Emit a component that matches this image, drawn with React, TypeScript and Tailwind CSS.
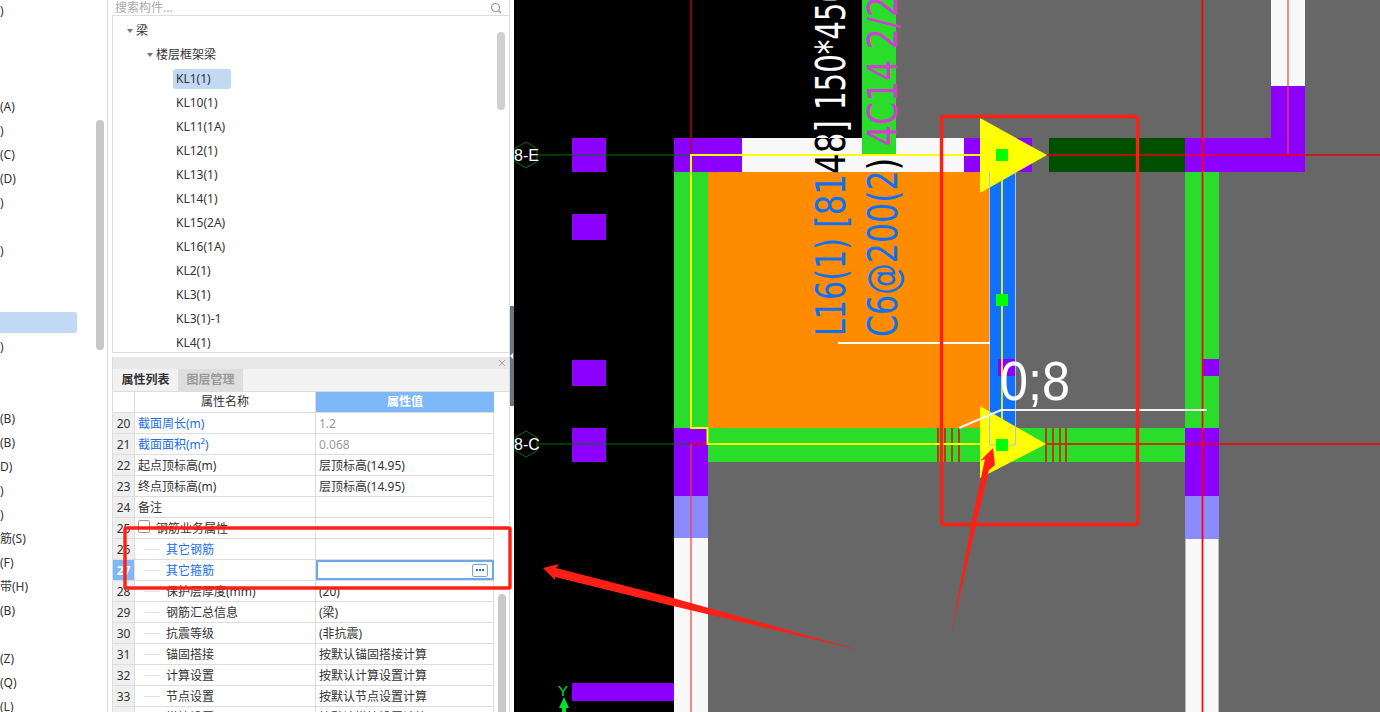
const SIDE_ROWS = [
  ")", "", "", "", "(A)", ")", "(C)", "(D)", ")", "", ")", "", "", "", ")", "", "",
  "(B)", "(B)", "D)", ")", ")", "筋(S)", "(F)", "带(H)", "(B)", "", "(Z)", "(Q)", "(L)",
];

const TREE_ITEMS = [
  "KL1(1)", "KL10(1)", "KL11(1A)", "KL12(1)", "KL13(1)", "KL14(1)", "KL15(2A)", "KL16(1A)",
  "KL2(1)", "KL3(1)", "KL3(1)-1", "KL4(1)",
];

const PROPS = [
  { no: 20, name: "截面周长(m)", value: "1.2", blue: true, muted: true },
  { no: 21, name: "截面面积(m²)", value: "0.068", blue: true, muted: true },
  { no: 22, name: "起点顶标高(m)", value: "层顶标高(14.95)" },
  { no: 23, name: "终点顶标高(m)", value: "层顶标高(14.95)" },
  { no: 24, name: "备注", value: "" },
  { no: 25, name: "钢筋业务属性", value: "", group: true },
  { no: 26, name: "其它钢筋", value: "", child: true, blue: true },
  { no: 27, name: "其它箍筋", value: "", child: true, blue: true, active: true },
  { no: 28, name: "保护层厚度(mm)", value: "(20)", child: true },
  { no: 29, name: "钢筋汇总信息", value: "(梁)", child: true },
  { no: 30, name: "抗震等级", value: "(非抗震)", child: true },
  { no: 31, name: "锚固搭接", value: "按默认锚固搭接计算", child: true },
  { no: 32, name: "计算设置", value: "按默认计算设置计算", child: true },
  { no: 33, name: "节点设置", value: "按默认节点设置计算", child: true },
  { no: 34, name: "搭接设置", value: "按默认搭接设置计算", child: true },
];

// x, y, w, h in page pixels
const CAD_RECTS: [number, number, number, number, string][] = [
  [896, 0, 484, 138, "#676767"],
  [1032, 138, 348, 34, "#676767"],
  [708, 172, 672, 540, "#676767"],
  [572, 138, 34, 34, "#8b00ff"],
  [572, 214, 34, 26, "#8b00ff"],
  [572, 360, 34, 26, "#8b00ff"],
  [572, 428, 34, 34, "#8b00ff"],
  [572, 683, 102, 18, "#8b00ff"],
  [742, 138, 222, 34, "#f8f8f8"],
  [674, 138, 68, 34, "#8b00ff"],
  [964, 138, 68, 34, "#8b00ff"],
  [862, 0, 34, 154, "#2bdd2b"],
  [674, 172, 34, 256, "#2bdd2b"],
  [708, 172, 282, 256, "#ff8c00"],
  [990, 172, 26, 256, "#1070ff"],
  [998, 359, 18, 17, "#8b00ff"],
  [1049, 138, 136, 34, "#005000"],
  [1185, 138, 120, 34, "#8b00ff"],
  [1271, 86, 34, 52, "#8b00ff"],
  [1271, 0, 34, 86, "#f8f8f8"],
  [1185, 172, 34, 256, "#2bdd2b"],
  [1203, 359, 16, 17, "#8b00ff"],
  [708, 428, 477, 34, "#2bdd2b"],
  [674, 428, 34, 68, "#8b00ff"],
  [674, 496, 34, 42, "#8b8bff"],
  [674, 538, 34, 174, "#f8f8f8"],
  [1185, 428, 34, 68, "#8b00ff"],
  [1185, 496, 34, 43, "#8b8bff"],
  [1185, 539, 34, 173, "#f8f8f8"],
];

const BEAM_TICKS = [938, 945, 952, 959, 1046, 1053, 1060, 1066];
const LABEL_FONT = "'DejaVu Sans', sans-serif";

const AxisMark = ({ y, label }: { y: number; label: string }) => (
  <g>
    <polygon
      points={`526,${y - 13} 537,${y - 6.5} 537,${y + 6.5} 526,${y + 13} 515,${y + 6.5} 515,${y - 6.5}`}
      fill="none"
      stroke="#007000"
    />
    <line x1={537} y1={y} x2={691} y2={y} stroke="#007000" strokeWidth={1.2} />
    <text x={514} y={y + 6} fill="#fff" fontSize={16} fontFamily="'Liberation Sans', sans-serif">
      {label}
    </text>
  </g>
);

const VerticalText = ({
  text,
  x,
  y,
  length,
  fill,
}: {
  text: string;
  x: number;
  y: number;
  length: number;
  fill: string;
}) => (
  <text
    transform={`translate(${x} ${y}) rotate(-90)`}
    fill={fill}
    fontSize={40}
    fontFamily={LABEL_FONT}
    textLength={length}
    lengthAdjust="spacingAndGlyphs"
  >
    {text}
  </text>
);

// the CAD view paints text in an inverted colour, so it changes with the fill below it
const BeamLabels = ({ fill }: { fill: string }) => (
  <>
    <VerticalText text="L16(1)" x={845} y={336} length={98} fill={fill} />
    <VerticalText text="[8148]" x={845} y={228} length={108} fill={fill} />
    <VerticalText text="150*450" x={845} y={110} length={126} fill={fill} />
    <VerticalText text="C6@200(2)" x={897} y={337} length={179} fill={fill} />
  </>
);

const CadCanvas = () => (
  <svg className="block h-full w-full" viewBox="514 0 866 712">
    <defs>
      <clipPath id="on-orange">
        <rect x={514} y={172} width={500} height={540} />
      </clipPath>
      <clipPath id="on-white">
        <rect x={514} y={138} width={500} height={34} />
      </clipPath>
      <clipPath id="on-black">
        <rect x={514} y={0} width={348} height={138} />
      </clipPath>
    </defs>
    <rect x={514} y={0} width={866} height={712} fill="#000" />
    {CAD_RECTS.map(([x, y, w, h, fill], i) => (
      <rect key={i} x={x} y={y} width={w} height={h} fill={fill} />
    ))}
    <line x1={1185.5} y1={539} x2={1185.5} y2={712} stroke="#bbb" />
    <line x1={1218.5} y1={539} x2={1218.5} y2={712} stroke="#bbb" />

    <AxisMark y={155} label="8-E" />
    <AxisMark y={444} label="8-C" />

    {/* red axes */}
    <line x1={691} y1={0} x2={691} y2={155} stroke="#b00020" strokeWidth={1.5} />
    <line x1={691} y1={444} x2={691} y2={712} stroke="#ff3b3b" strokeOpacity={0.6} strokeWidth={2} />
    <line x1={1288} y1={0} x2={1288} y2={155} stroke="#ff3b3b" strokeOpacity={0.6} strokeWidth={2} />
    <line x1={1202.5} y1={0} x2={1202.5} y2={712} stroke="#ff0000" strokeWidth={1.7} />
    <line x1={1047} y1={155} x2={1380} y2={155} stroke="#e8000f" strokeWidth={1.7} />
    <line x1={1046} y1={444} x2={1380} y2={444} stroke="#f00000" strokeWidth={1.7} />
    <line x1={691} y1={444} x2={708} y2={444} stroke="#f00000" strokeWidth={1.7} />
    {BEAM_TICKS.map((x) => (
      <line key={x} x1={x} y1={428} x2={x} y2={462} stroke="#e8141c" strokeWidth={1.7} />
    ))}

    {/* selected beam outline */}
    <polyline
      points="1002,155 691,155 691,428 707.5,428 707.5,444 1002,444"
      fill="none"
      stroke="#ffff00"
      strokeWidth={2}
    />
    <polygon points="980,118 1047,155 980,193" fill="#ffff00" />
    <polygon points="980,406 1046,444 980,478" fill="#ffff00" />
    <line x1={1002} y1={155} x2={1002} y2={445} stroke="#ffff00" strokeWidth={1.7} />
    <polyline
      points="989.5,172 989.5,445 1015.5,445 1015.5,172"
      fill="none"
      stroke="#a5c4ee"
      strokeWidth={1}
    />
    <rect x={996} y={149} width={12} height={12} fill="#00ff00" />
    <rect x={996} y={294} width={12} height={12} fill="#00ff00" />
    <rect x={996} y={439} width={12} height={12} fill="#00ff00" />

    {/* beam labels */}
    <g clipPath="url(#on-orange)">
      <BeamLabels fill="#1070f0" />
    </g>
    <g clipPath="url(#on-white)">
      <BeamLabels fill="#000" />
    </g>
    <g clipPath="url(#on-black)">
      <BeamLabels fill="#fff" />
    </g>
    <VerticalText text="4C14 2/2" x={897} y={146} length={150} fill="#d040d0" />

    <line x1={838} y1={343} x2={990} y2={343} stroke="#fff" strokeWidth={2} />
    <polyline points="959,428 1001,410 1207,410" fill="none" stroke="#f4f4f4" strokeWidth={2} />
    <text
      x={1000}
      y={400}
      fill="#fff"
      fontSize={55}
      fontFamily="'Liberation Sans', sans-serif"
      textLength={70}
      lengthAdjust="spacingAndGlyphs"
    >
      0;8
    </text>

    {/* world axis */}
    <text x={558} y={696} fill="#00e030" fontSize={15} fontFamily="'Liberation Sans', sans-serif">
      Y
    </text>
    <polygon points="564,697 569,708 566,708 566,712 562,712 562,708 559,708" fill="#00e030" />
  </svg>
);

const Annotations = () => (
  <svg className="pointer-events-none absolute inset-0" width={1380} height={712} viewBox="0 0 1380 712">
    <rect x={125} y={528} width={385} height={60} rx={1} fill="none" stroke="#ff2015" strokeWidth={3.4} />
    <rect x={941.5} y={116.5} width={196} height={408} rx={2} fill="none" stroke="#ff2015" strokeWidth={3.4} />
    <polygon points="543,568 559,564 556,568 673,598 863,651 673,606 555,577 555,580" fill="#ff2015" />
    <polygon points="993,448 980,461 985,459 972,520 951,635 977,520 989,470 995,465" fill="#ff2015" />
  </svg>
);

const PropRow = ({ row }: { row: (typeof PROPS)[number] }) => (
  <div className="flex h-[21px] w-[381px] shrink-0 border-b border-[#dddddd] text-xs leading-[22px]">
    <div
      className={
        row.active
          ? "w-[22px] shrink-0 border-r border-[#dddddd] bg-[#7fb8f8] text-center font-bold text-white"
          : "w-[22px] shrink-0 border-r border-[#dddddd] bg-[#efefef] text-center text-[#333]"
      }
    >
      {row.no}
    </div>
    <div
      className={`relative w-[181px] shrink-0 border-r border-[#dddddd] ${
        row.child ? "pl-[31px]" : row.group ? "pl-[21px]" : "pl-[3px]"
      } ${row.blue ? "text-[#1a6ee8]" : "text-[#333]"}`}
    >
      {row.child && <span className="absolute top-[10px] left-[9px] h-px w-4 bg-[#e2e2e2]" />}
      {row.group && (
        <span className="absolute top-[2px] left-[3px] h-[13px] w-[12px] rounded-[2px] border border-[#999]" />
      )}
      {row.name}
    </div>
    {row.active ? (
      <div className="flex w-[178px] shrink-0 items-center justify-end border-2 border-[#6ea8e8] bg-white pr-1">
        <span className="flex h-[13px] w-4 items-center justify-center gap-px rounded-[2px] border border-[#6ea8e8]">
          <i className="h-0.5 w-0.5 bg-[#2a6fd0]" />
          <i className="h-0.5 w-0.5 bg-[#2a6fd0]" />
          <i className="h-0.5 w-0.5 bg-[#2a6fd0]" />
        </span>
      </div>
    ) : (
      <div
        className={`w-[178px] shrink-0 border-r border-[#dddddd] pl-[3px] ${
          row.muted ? "text-[#999]" : "text-[#333]"
        }`}
      >
        {row.value}
      </div>
    )}
  </div>
);

export default function App() {
  return (
    <div className="relative flex h-[712px] w-[1380px] overflow-hidden bg-white font-['Noto_Sans','Noto_Sans_CJK_SC',sans-serif] text-xs text-[#333]">
      {/* cropped component list */}
      <aside className="relative w-[108px] shrink-0 border-r border-[#dddddd]">
        <span className="absolute top-[312px] left-0 h-[21px] w-[77px] rounded-r-[3px] bg-[#c1d9f3]" />
        <span className="absolute top-[120px] left-[96px] h-[230px] w-2 rounded bg-[#c8c8c8]" />
        <div className="-mt-px">
          {SIDE_ROWS.map((label, i) => (
            <div key={i} className="relative h-6 leading-6 whitespace-nowrap">
              {label}
            </div>
          ))}
        </div>
      </aside>

      <main className="ml-1 flex w-[398px] shrink-0 flex-col border-r border-[#dddddd]">
        <div className="flex h-4 shrink-0 items-center justify-between border-b border-[#dddddd] pr-[7px] pl-[3px] text-[#aaa]">
          <span>搜索构件...</span>
          <svg width="12" height="12" viewBox="0 0 12 12" fill="none" stroke="#999" strokeWidth="1.2">
            <circle cx="5.5" cy="5.5" r="4" />
            <path d="M8.5 8.5 11 11" />
          </svg>
        </div>

        <div className="relative h-[337px] shrink-0 overflow-hidden border-b border-l border-[#dddddd] pt-[3px]">
          <span className="absolute top-4 right-1 h-[78px] w-2 rounded bg-[#d0d0d0]" />
          <div className="flex h-6 items-center gap-[3px] pl-[14px]">
            <span className="h-0 w-0 border-x-[3px] border-t-[4px] border-x-transparent border-t-[#777]" />
            <span>梁</span>
          </div>
          <div className="flex h-6 items-center gap-[3px] pl-[34px]">
            <span className="h-0 w-0 border-x-[3px] border-t-[4px] border-x-transparent border-t-[#777]" />
            <span>楼层框架梁</span>
          </div>
          {TREE_ITEMS.map((item, i) => (
            <div key={item} className="flex h-6 items-center pl-[60px]">
              <span className={i === 0 ? "w-[58px] rounded-[3px] bg-[#c1d9f3] py-[2px] pl-[3px]" : "pl-[3px]"}>
                {item}
              </span>
            </div>
          ))}
        </div>

        <div className="relative mt-1 flex min-h-0 flex-1 flex-col overflow-hidden border-l border-[#dddddd]">
          <div className="flex h-3 shrink-0 items-center justify-end bg-[#e8e8e8] pr-[3px]">
            <svg width="8" height="8" viewBox="0 0 8 8" stroke="#aaa" strokeWidth="1">
              <path d="M1 1 7 7M7 1 1 7" />
            </svg>
          </div>
          <div className="flex h-[23px] shrink-0 border-b border-[#dddddd] bg-[#f2f2f2] font-bold">
            <div className="flex w-[65px] items-center justify-center text-[#333]">属性列表</div>
            <div className="flex w-[65px] items-center justify-center border-x border-[#dddddd] bg-[#dedede] text-[#999]">
              图层管理
            </div>
          </div>
          <div className="flex h-[21px] w-[381px] shrink-0 border-b border-[#dddddd]">
            <div className="w-[22px] shrink-0 border-r border-[#dddddd]" />
            <div className="w-[181px] shrink-0 border-r border-[#dddddd] text-center leading-[20px]">属性名称</div>
            <div className="w-[178px] shrink-0 bg-[#7fb8f8] text-center leading-[20px] font-bold text-white">属性值</div>
          </div>
          {PROPS.map((row) => (
            <PropRow key={row.no} row={row} />
          ))}
          <span className="absolute top-[237px] right-[3px] h-[130px] w-2 rounded bg-[#c8c8c8]" />
        </div>
      </main>

      {/* splitter */}
      <div className="flex w-1 shrink-0 flex-col">
        <div className="h-[306px]" />
        <div className="flex h-[100px] items-center bg-[#6a7580]">
          <span className="h-0 w-0 border-y-[3px] border-r-[3px] border-y-transparent border-r-white" />
        </div>
      </div>

      <div className="min-w-0 flex-1">
        <CadCanvas />
      </div>

      <Annotations />
    </div>
  );
}
